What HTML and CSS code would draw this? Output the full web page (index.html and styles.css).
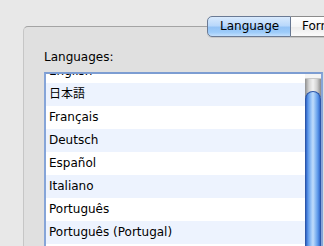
FILE: index.html
```html
<!DOCTYPE html>
<html>
<head>
<meta charset="utf-8">
<link rel="stylesheet" href="styles.css">
</head>
<body>
<div class="window">
  <div class="tabs">
    <div class="tab selected">Language</div>
    <div class="tab other">Formats</div>
  </div>
  <div class="panel">
    <div class="label">Languages:</div>
    <div class="listbox">
      <div class="list">
        <div class="rows">
          <div class="row">English</div>
          <div class="row alt">日本語</div>
          <div class="row">Français</div>
          <div class="row alt">Deutsch</div>
          <div class="row">Español</div>
          <div class="row alt">Italiano</div>
          <div class="row">Português</div>
          <div class="row alt">Português (Portugal)</div>
          <div class="row">Svenska</div>
        </div>
      </div>
      <div class="scroll">
        <div class="scroll-corner"></div>
        <div class="scroll-cap"></div>
        <div class="thumb"></div>
      </div>
    </div>
  </div>
</div>
</body>
</html>
```
FILE: styles.css
```css
html, body {
  margin: 0;
  height: 246px;
  overflow: hidden;
}
body {
  background: #e8e8e8;
  font-family: "DejaVu Sans", "Noto Sans CJK JP", sans-serif;
  font-size: 12px;
  color: #000;
}
.window {
  padding-top: 16px;
}
.tabs {
  display: flex;
  margin-left: 207px;
  height: 22px;
  position: relative;
  z-index: 1;
  overflow: hidden;
}
.tab {
  flex-shrink: 0;
  box-sizing: border-box;
  height: 21px;
  line-height: 19px;
  border: 1px solid #8c8c8c;
  white-space: nowrap;
  box-shadow: 0 1px 1px rgba(0,0,0,0.12);
}
.tab.selected {
  width: 84px;
  padding-left: 12px;
  border-color: #6a7a94;
  border-radius: 5px 0 0 5px;
  background: linear-gradient(#d9eafd 0%, #b9d8fb 45%, #94c3f6 55%, #9ccbf9 80%, #c3e0fd 100%);
}
.tab.other {
  padding-left: 11px;
  padding-right: 12px;
  border-left: none;
  background: linear-gradient(#ffffff 0%, #f6f6f6 50%, #ececec 55%, #fbfbfb 100%);
}
.panel {
  margin-left: 23px;
  margin-top: -12px;
  height: 240px;
  box-sizing: border-box;
  border-top: 1px solid #a4a4a4;
  border-left: 1px solid #c6c6c6;
  border-top-left-radius: 5px;
  background: #e0e0e0;
  padding: 23px 0 0 20px;
}
.label {
  line-height: 15px;
  height: 15px;
}
.listbox {
  margin-top: 7px;
  width: 279px;
  height: 200px;
  box-sizing: border-box;
  border: 2px solid #86a5d8;
  border-top-color: #7d9dd2;
  background: #fff;
  display: flex;
}
.list {
  flex: 1;
  overflow: hidden;
}
.rows {
  margin-top: -14px;
}
.row {
  height: 23px;
  line-height: 23px;
  padding-left: 3px;
  white-space: nowrap;
}
.row.alt {
  background: #edf3fe;
}
.scroll {
  width: 16px;
  display: flex;
  flex-direction: column;
  background: linear-gradient(to right, #b8b8b8, #ececec 30%, #f4f4f4 60%, #c4c4c4);
}
.scroll-corner {
  height: 4px;
  background: #f4f4f4;
  border-bottom: 1px solid #c8c8c8;
}
.scroll-cap {
  height: 18px;
  background: linear-gradient(to right, #8e8e8e, #d4d4d4 25%, #f2f2f2 50%, #d0d0d0 75%, #8a8a8a);
}
.thumb {
  flex: 1;
  margin-top: -6px;
  border-radius: 8px 8px 0 0;
  box-sizing: border-box;
  border: 1px solid #2c56a8;
  border-bottom: none;
  background: linear-gradient(to right, #2f63c4 0%, #5d98ea 15%, #a6cdf9 40%, #c0dcfb 50%, #9cc6f6 62%, #5a97ea 85%, #3468c8 100%);
}
```
